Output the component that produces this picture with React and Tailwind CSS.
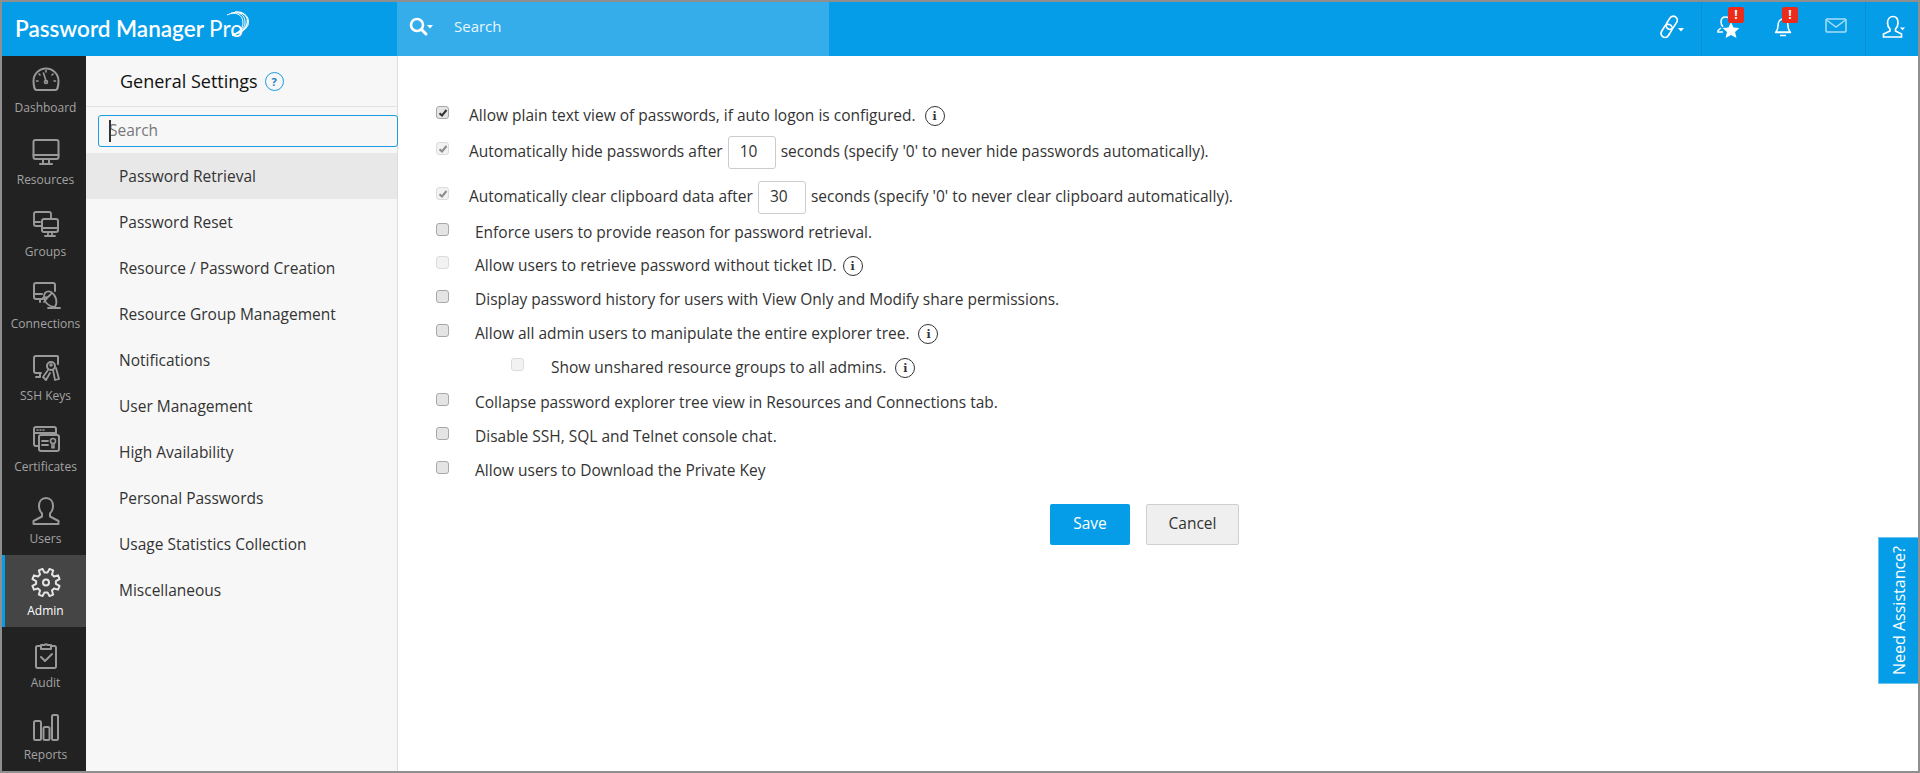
import React from "react";

const S = ({ children, w = 30, h = 30, vb = "0 0 30 30", c = "" }) => (
  <svg width={w} height={h} viewBox={vb} fill="none" stroke="currentColor" strokeWidth="1.6" strokeLinecap="round" strokeLinejoin="round" className={c}>{children}</svg>
);

const gearPath = (() => {
  const cx = 15, cy = 14.5, R = 14, r = 10, n = 8;
  const pts = [];
  for (let i = 0; i < n; i++) {
    const a = (i * 2 * Math.PI) / n + Math.PI / 8;
    const d = Math.PI / n;
    [[r, -d * 0.62], [R, -d * 0.36], [R, d * 0.36], [r, d * 0.62]].forEach(([rad, o]) => {
      pts.push(`${(cx + rad * Math.cos(a + o)).toFixed(2)} ${(cy + rad * Math.sin(a + o)).toFixed(2)}`);
    });
  }
  return "M" + pts.join("L") + "z";
})();

const navIcons = {
  Dashboard: <S><path d="M5.500 25h19c1.500 0 3-3.500 3-9a12.500 12.500 0 0 0-25 0c0 5.500 1.500 9 3 9z" strokeWidth="2"/><path d="M15 16l-2.500-8M15 5.500v1.500M8 9l1 1M22 9l-1 1M5.500 16h1.500M24.500 16h-1.500" /><circle cx="15" cy="17" r="1.500"/></S>,
  Resources: <S><rect x="2.500" y="3" width="25" height="19" rx="2" strokeWidth="2"/><path d="M2.500 18h25M12 22v5M18 22v5M9 27h12" strokeWidth="2"/></S>,
  Groups: <S><path d="M11 17H5a2 2 0 0 1-2-2V5a2 2 0 0 1 2-2h13a2 2 0 0 1 2 2v5M3 13h6" strokeWidth="1.900"/><rect x="11" y="10" width="16" height="13" rx="2" strokeWidth="2"/><path d="M11 19h16M17 23v3M21 23v3M14 27h10" strokeWidth="1.800"/></S>,
  Connections: <S><path d="M12 18H5a2 2 0 0 1-2-2V4a2 2 0 0 1 2-2h17a2 2 0 0 1 2 2v6M3 13h8M9 18v3" strokeWidth="2"/><path d="M14 12c-3 6 1 13 10 14 3-5 1-12-4-15-2-1-4-1-6 1zM17 16l3-3M12 17l5-1M13 21l4-5M17 27h12" strokeWidth="1.800"/></S>,
  "SSH Keys": <S><path d="M10 20H5a2 2 0 0 1-2-2V5a2 2 0 0 1 2-2h21a2 2 0 0 1 1 .300V11M5 24h4M9 20v4" strokeWidth="2"/><circle cx="20" cy="13" r="4" strokeWidth="2"/><path d="M17 17l-5 7 3 3 4-7M22 17l2 10 4-1-3-11" strokeWidth="1.800"/><circle cx="20" cy="12" r="1"/></S>,
  Certificates: <S><path d="M7 22H5a2 2 0 0 1-2-2V5a2 2 0 0 1 2-2h18a2 2 0 0 1 2 2v5M3 9h22" strokeWidth="2"/><path d="M6 6h1M9 6h1M12 6h1"/><rect x="8" y="11" width="20" height="16" rx="2" strokeWidth="2"/><path d="M11 17h6M11 21h6" strokeWidth="1.800"/><circle cx="22" cy="17" r="2.500"/><path d="M21 19.500V24l1-1 1 1v-4.500"/></S>,
  Users: <S><path d="M15 2c-4.500 0-7 3.500-7 8 0 3 1.500 6 3 7.500v3L2.500 25v3h25v-3L19 20.500v-3c1.500-1.500 3-4.500 3-7.500 0-4.500-2.500-8-7-8z" strokeWidth="2"/></S>,
  Admin: <S><path d={gearPath} strokeWidth="2"/><circle cx="15" cy="14.500" r="3" strokeWidth="2"/></S>,
  Audit: <S><path d="M10 6H6.500A1.500 1.500 0 0 0 5 7.500v19A1.500 1.500 0 0 0 6.500 28h17a1.500 1.500 0 0 0 1.500-1.500v-19A1.500 1.500 0 0 0 23.500 6H20M10 5h3.500a2 2 0 0 1 3 0H20v4H10z" strokeWidth="2"/><path d="M10 17l4 4 7-7" strokeWidth="2"/></S>,
  Reports: <S><rect x="3" y="9" width="7" height="19" rx="1.500" strokeWidth="2"/><rect x="12.500" y="15" width="6" height="13" rx="1.500" strokeWidth="2"/><rect x="21" y="3" width="6" height="25" rx="1.500" strokeWidth="2"/></S>,
};

const nav = ["Dashboard", "Resources", "Groups", "Connections", "SSH Keys", "Certificates", "Users", "Admin", "Audit", "Reports"];
const menu = ["Password Retrieval", "Password Reset", "Resource / Password Creation", "Resource Group Management", "Notifications", "User Management", "High Availability", "Personal Passwords", "Usage Statistics Collection", "Miscellaneous"];

const Info = ({ c = "ml-2" }) => (
  <span className={`inline-flex shrink-0 items-center justify-center w-[20px] h-[20px] rounded-full border-[1.5px] border-[#333] text-[11px] leading-none font-bold text-[#333] ${c}`} style={{ fontFamily: '"DejaVu Serif", serif' }}>i</span>
);

const Box = ({ checked, disabled }) => (
  <span className={`shrink-0 -mt-[7px] w-[13px] h-[13px] rounded-[3px] border flex items-center justify-center ${disabled ? "border-[#dcdcdc] bg-[#f2f2f2] text-[#8c8c8c]" : "border-[#a8a8a8] bg-[#e4e4e4] text-[#333]"}`}>
    {checked && (
      <svg width="10" height="10" viewBox="0 0 10 10" fill="none" stroke="currentColor" strokeWidth="2"><path d="M1.500 5.200L4 7.500 8.500 2" /></svg>
    )}
  </span>
);

const Num = ({ v }) => (
  <span className="mx-[5px] w-[48px] h-[33px] inline-flex items-center pl-[11px] border border-[#ccc] rounded-[3px] text-[#333]">{v}</span>
);

const Row = ({ children, checked, disabled, h = "h-[34px]", gap = "w-[20px]", c = "" }) => (
  <div className={`flex items-center text-[#333] ${h} ${c}`}>
    <Box checked={checked} disabled={disabled} />
    <span className={`shrink-0 ${gap}`} />
    <div className="flex items-center whitespace-nowrap">{children}</div>
  </div>
);

export default function App() {
  return (
    <div className="w-[1920px] h-[773px] overflow-hidden border-2 border-[#8f8f8f] bg-white flex flex-col relative text-[15.5px]" style={{ fontFamily: '"Open Sans", sans-serif' }}>
      <header className="h-[54px] shrink-0 bg-[#059de8] flex text-white">
        <div className="w-[395px] shrink-0 flex items-center pl-[13px] relative">
          <span className="text-[22.5px] font-semibold whitespace-nowrap" style={{ fontFamily: 'Lato, sans-serif' }}>Password Manager <span className="font-normal">Pro</span></span>
          <svg width="26" height="28" viewBox="0 0 26 28" fill="none" stroke="white" className="absolute left-[224px] top-[9px]">
            <path d="M1 4c8-4 16-1 16 8 0 6-5 10-11 12" strokeWidth="1" />
            <path d="M5 2c8-2 15 2 14 11-1 5-6 9-13 11" strokeWidth="1" />
            <path d="M9 1c8-1 14 4 12 12-1 5-7 9-15 11" strokeWidth="1.300" />
            <path d="M14 2c6 1 10 5 8 12-2 5-8 8-16 10" strokeWidth="1" />
          </svg>
        </div>
        <div className="w-[432px] shrink-0 bg-[#36adeb] flex items-center pl-[11px] pb-[5px]">
          <svg width="26" height="22" viewBox="0 0 26 22" fill="none" stroke="white">
            <circle cx="9" cy="9" r="6" strokeWidth="2.500" />
            <path d="M13.500 13.500L18 18" strokeWidth="3" strokeLinecap="round" />
            <path d="M19 9h6l-3 3.500z" fill="white" stroke="none" />
          </svg>
          <span className="ml-[20px] text-[15px] text-[#e8f6fd]">Search</span>
        </div>
        <div className="flex-1 flex justify-end relative">
          <div className="w-[81px] flex items-start justify-end pr-[15px] pt-[13px] border-r border-[#0a8fd2]">
            <svg width="28" height="24" viewBox="0 0 28 24" fill="none" stroke="white" strokeWidth="1.700">
              <g transform="rotate(32 11 12)">
                <rect x="7" y="0" width="8" height="14" rx="4" />
                <rect x="7" y="9.500" width="8" height="14" rx="4" />
              </g>
              <path d="M20 13h6l-3 3.500z" fill="white" stroke="none" />
            </svg>
          </div>
          <div className="w-[64px] flex items-start pl-[15px] pt-[13px] relative">
            <svg width="26" height="24" viewBox="0 0 26 24" fill="none" stroke="white" strokeWidth="1.500">
              <path d="M6 12c-1-1-2-3-2-5 0-3 1.500-5 4.500-5S13 4 13 7M4 13l-3 2.500v1.500h5" />
              <path d="M14 7l2.500 5.500 6 .5-4.500 4 1.500 6-5.500-3-5.500 3 1.500-6-4.500-4 6-.5z" fill="white" stroke="none" />
            </svg>
            <span className="absolute left-[26px] top-[5px] w-[16px] h-[16px] bg-[#ec2b1b] rounded-[2px] flex items-center justify-center text-[12px] font-bold text-white leading-none">!</span>
          </div>
          <div className="w-[45px] flex items-start pl-[8px] pt-[15px] relative">
            <svg width="18" height="20" viewBox="0 0 18 20" fill="none" stroke="white" strokeWidth="1.600">
              <path d="M2 15c1-1.500 2-3 2-6 0-4 2-7 5-7s5 3 5 7c0 3 1 4.500 2 6z M1 15.500h16M6 18.500h6" />
            </svg>
            <span className="absolute left-[16px] top-[5px] w-[16px] h-[16px] bg-[#ec2b1b] rounded-[2px] flex items-center justify-center text-[12px] font-bold text-white leading-none">!</span>
          </div>
          <div className="w-[55px] flex items-start pl-[14px] pt-[16px] border-r border-[#0a8fd2]">
            <svg width="22" height="15" viewBox="0 0 22 15" fill="none" stroke="#a6def7" strokeWidth="1.500"><rect x="1" y="1" width="20" height="13" rx="1" /><path d="M1.500 2L11 9l9.500-7" /></svg>
          </div>
          <div className="w-[52px] flex items-start pl-[16px] pt-[13px]">
            <svg width="26" height="24" viewBox="0 0 26 24" fill="none" stroke="white" strokeWidth="1.700">
              <path d="M11 1.500c-3.500 0-5.500 3-5.500 6.500 0 2.500 1 4.500 2.500 6v2L1.500 19v3h18v-3l-6-3v-2c1.500-1.500 2.500-3.500 2.500-6 0-3.500-1.500-6.500-5-6.500z" />
              <path d="M17 12h7l-3.500 4z" fill="white" stroke="#059de8" strokeWidth="1" />
            </svg>
          </div>
        </div>
      </header>

      <div className="flex-1 flex min-h-0">
        <aside className="w-[84px] shrink-0 bg-[#222222] flex flex-col">
          {nav.map((n, i) => {
            const active = n === "Admin";
            return (
              <div key={n} className={`${i === 0 ? "h-[67px]" : "h-[72px]"} ${i >= 5 ? "pb-[6px]" : "pb-[5px]"} shrink-0 flex flex-col items-center justify-end pl-[3px] relative ${active ? "bg-[#454545] text-white" : "text-[#a3a3a3]"}`}>
                {active && <span className="absolute left-0 top-0 bottom-0 w-[3px] bg-[#059de8]" />}
                <span className={`mb-[3px] ${active ? "text-[#e4e4e4]" : "text-[#999]"}`}>{navIcons[n]}</span>
                <span className="text-[12px] leading-[20px]">{n}</span>
              </div>
            );
          })}
        </aside>

        <aside className="w-[312px] shrink-0 bg-[#f7f7f7] border-r border-[#dcdcdc] flex flex-col">
          <div className="h-[51px] shrink-0 pl-[34px] flex items-center border-b border-[#e3e3e3] text-[18px] text-[#111]">
            General Settings
            <span className="ml-[7px] w-[19px] h-[19px] rounded-full border-[1.500px] border-[#1a9ce2] text-[#1a7fc4] flex items-center justify-center text-[11px] font-bold leading-none">?</span>
          </div>
          <div className="pl-[12px] -mr-[1px] pt-[8px] pb-[6px]">
            <div className="h-[32px] border border-[#1a9ce2] rounded-[3px] flex items-center pl-[10px] text-[#777] relative">
              <span className="absolute left-[10px] top-[4px] w-[1.500px] h-[22px] bg-[#333]" />
              Search
            </div>
          </div>
          {menu.map((m, i) => (
            <div key={m} className={`h-[46px] shrink-0 flex items-center pl-[33px] pt-[1px] text-[#333] ${i === 0 ? "bg-[#e8e8e8]" : ""}`}>{m}</div>
          ))}
        </aside>

        <main className="flex-1 pl-[38px] pt-[43px] relative">
          <Row checked>Allow plain text view of passwords, if auto logon is configured.<Info c="ml-[9px]" /></Row>
          <Row checked disabled h="h-[38px]">Automatically hide passwords after<Num v="10" />seconds (specify '0' to never hide passwords automatically).</Row>
          <Row checked disabled h="h-[42px]" c="mt-[5px]">Automatically clear clipboard data after<Num v="30" />seconds (specify '0' to never clear clipboard automatically).</Row>
          <Row gap="w-[26px]" h="h-[30px]">Enforce users to provide reason for password retrieval.</Row>
          <Row gap="w-[26px]" disabled c="mt-[1px]">Allow users to retrieve password without ticket ID.<Info c="ml-[6px]" /></Row>
          <Row gap="w-[26px]">Display password history for users with View Only and Modify share permissions.</Row>
          <Row gap="w-[26px]">Allow all admin users to manipulate the entire explorer tree.<Info c="ml-[9px]" /></Row>
          <div className="pl-[75px]">
            <Row gap="w-[27px]" disabled>Show unshared resource groups to all admins.<Info c="ml-[9px]" /></Row>
          </div>
          <Row gap="w-[26px]" c="mt-[1px]">Collapse password explorer tree view in Resources and Connections tab.</Row>
          <Row gap="w-[26px]">Disable SSH, SQL and Telnet console chat.</Row>
          <Row gap="w-[26px]">Allow users to Download the Private Key</Row>
          <div className="flex mt-[16px] pl-[614px] gap-[16px]">
            <button className="w-[80px] h-[41px] pb-[2px] bg-[#059de8] text-white rounded-[2px]">Save</button>
            <button className="w-[93px] h-[41px] pb-[2px] bg-[#efefef] border border-[#cfcfcf] text-[#333] rounded-[2px]">Cancel</button>
          </div>
          <div className="absolute right-0 top-[481px] w-[40px] h-[147px] bg-[#059de8] border border-[#6cc4ef] border-r-0 flex items-center justify-center">
            <span className="text-white text-[16px] whitespace-nowrap" style={{ writingMode: "vertical-rl", transform: "rotate(180deg)" }}>Need Assistance?</span>
          </div>
        </main>
      </div>
    </div>
  );
}
